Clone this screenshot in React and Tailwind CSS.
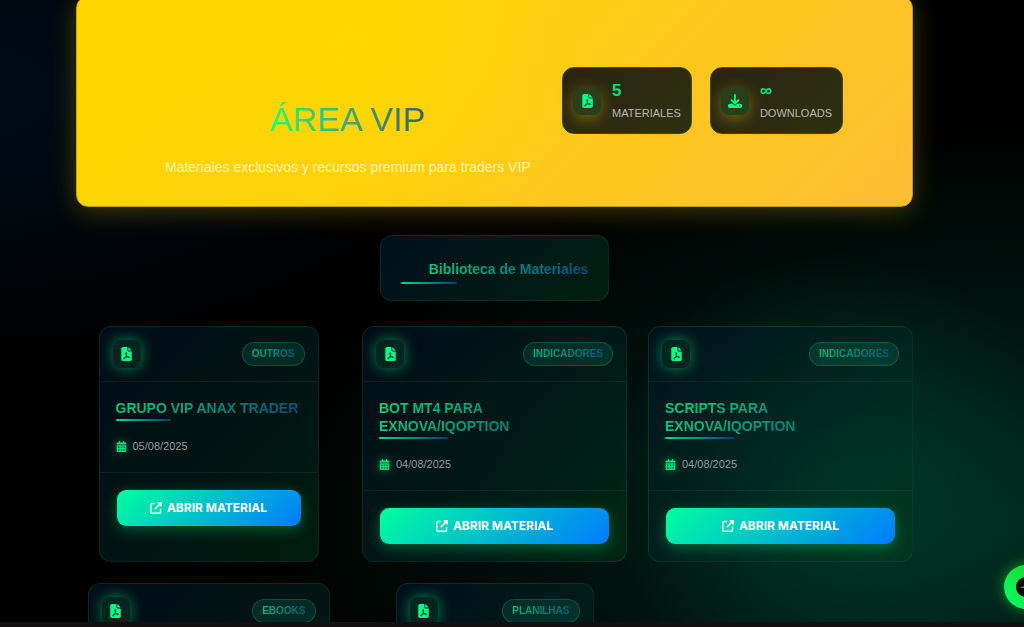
import React from 'react';
import { FaCalendarDays, FaDownload, FaUpRightFromSquare } from 'react-icons/fa6';

const materials = [
  { id: 1, title: 'GRUPO VIP ANAX TRADER', category: 'OUTROS', date: '05/08/2025', width: 'w-[220px]' },
  { id: 2, title: 'BOT MT4 PARA EXNOVA/IQOPTION', category: 'INDICADORES', date: '04/08/2025', width: 'w-full' },
  { id: 3, title: 'SCRIPTS PARA EXNOVA/IQOPTION', category: 'INDICADORES', date: '04/08/2025', width: 'w-full' },
  { id: 4, category: 'EBOOKS', width: 'w-[242px]' },
  { id: 5, category: 'PLANILHAS', width: 'w-[198px]' },
];

const PdfIcon = ({ className = '' }) => (
  <svg viewBox="0 0 384 512" className={`h-3.5 w-[11px] ${className}`} aria-hidden="true">
    <path
      fill="currentColor"
      d="M224 0H64C28.7 0 0 28.7 0 64v384c0 35.3 28.7 64 64 64h256c35.3 0 64-28.7 64-64V160H256c-17.7 0-32-14.3-32-32V0zM256 0v128h128L256 0z"
    />
    <path
      fill="none"
      stroke="#04281f"
      strokeWidth="32"
      strokeLinecap="round"
      strokeLinejoin="round"
      d="M182 212c-22 0-16 52 4 96 22 48 62 84 96 82 30-2 28-34-8-38-54-6-132 18-172 52-26 22-8 44 14 30 34-22 76-98 82-156 2-34-2-66-16-66z"
    />
  </svg>
);

const Stat = ({ icon, value, label }) => (
  <div className="flex items-center gap-[11px] rounded-xl border border-[#3d4a12] bg-[linear-gradient(135deg,#2a2410,#2d3012)] px-[10px] pt-[11px] pb-[10px]">
    <div className="flex size-7 items-center justify-center rounded-lg bg-[#283f19] text-[#00ff88] shadow-[0_4px_15px_rgba(255,215,0,0.35)]">
      {icon}
    </div>
    <div>
      <div className="text-[17px] leading-6 font-bold text-[#00e07c]">{value}</div>
      <div className="text-[11px] leading-5 text-[#b8b8b0]">{label}</div>
    </div>
  </div>
);

const MaterialCard = ({ material }) => (
  <article
    className={`flex flex-col overflow-hidden rounded-xl border border-[#00ff88]/10 bg-[linear-gradient(135deg,rgba(0,20,40,0.6),rgba(0,60,30,0.45))] ${material.width}`}
  >
    <div className="flex items-center justify-between border-b border-[#00ff88]/8 px-[13px] py-[13px]">
      <div className="flex size-7 items-center justify-center rounded-lg bg-[#02261f] text-[#00ff88] shadow-[0_0_14px_rgba(0,255,136,0.5)]">
        <PdfIcon />
      </div>
      <span className="rounded-full border border-[#00ff88]/20 bg-[#00ffc8]/10 px-[9px] py-[3px] text-[10px] leading-4 font-bold">
        <span className="bg-linear-to-r from-[#00b870] to-[#005a78] bg-clip-text text-transparent">{material.category}</span>
      </span>
    </div>

    {material.title ? (
      <>
        <div className="border-b border-white/5 px-4 pt-[17px] pb-[18px]">
          <div className="relative mb-[21px]">
            <h3 className="bg-[linear-gradient(135deg,#00d87c,#00467c)] bg-clip-text text-[14px] leading-[18px] font-bold text-transparent">
              {material.title}
            </h3>
            <span className="absolute -bottom-1 left-0 h-0.5 w-[30%] rounded bg-linear-to-r from-[#00dd80] to-[#003c70]" />
          </div>
          <div className="flex items-center gap-1.5 text-[11px] leading-4 text-[#93999a]">
            <FaCalendarDays size={11} className="text-[#00e47a] drop-shadow-[0_0_5px_rgba(0,255,136,0.5)]" />
            <span>{material.date}</span>
          </div>
        </div>
        <div className="p-[17px]">
          <button
            type="button"
            className="flex h-9 w-full items-center justify-center gap-[5px] rounded-[9px] bg-[linear-gradient(135deg,#00ff9d,#007bff)] font-['Inter',sans-serif] text-[12px] font-bold text-white shadow-[0_4px_14px_rgba(0,255,136,0.3)]"
          >
            <FaUpRightFromSquare size={12} />
            ABRIR MATERIAL
          </button>
        </div>
      </>
    ) : (
      <div className="h-44" />
    )}
  </article>
);

const App = () => {
  return (
    <div className="relative flex h-screen flex-col overflow-hidden bg-black font-['Liberation_Sans',Arial,sans-serif]">
      <main className="min-h-0 flex-1 overflow-hidden bg-[radial-gradient(circle_at_82%_78%,rgba(0,90,60,0.45),transparent_24%),radial-gradient(ellipse_at_105%_85%,#002b1f,transparent_55%),radial-gradient(ellipse_at_-5%_15%,#000d1a,transparent_35%)] pr-[111px] pl-[76px]">
        <header className="-mt-1 flex h-[211px] items-start justify-between rounded-xl border border-[#b89d18] bg-[radial-gradient(circle_at_33%_25%,#ffd700,transparent_38%),linear-gradient(135deg,#ffd700_15%,#ffbd33)] pr-[69px] pl-[88px] shadow-[0_4px_26px_rgba(255,215,0,0.25)]">
          <div className="pt-[102px] text-center">
            <h1 className="mx-auto mb-[18px] w-fit bg-linear-to-r from-[#2cfa6c] to-[#38606c] bg-clip-text text-[34px] leading-10 text-transparent">
              ÁREA VIP
            </h1>
            <p className="text-[14px] leading-5 text-[#fff3b0]">Materiales exclusivos y recursos premium para traders VIP</p>
          </div>
          <div className="flex gap-[18px] pt-[70px]">
            <Stat icon={<PdfIcon />} value="5" label="MATERIALES" />
            <Stat icon={<FaDownload size={14} />} value="∞" label="DOWNLOADS" />
          </div>
        </header>

        <section className="mt-7">
          <div className="mx-auto mb-[25px] w-fit rounded-xl border border-[#00ff88]/10 bg-[linear-gradient(135deg,#000f1c,#002010)] px-5 pt-[21px] pb-[19px]">
            <div className="relative pl-7">
              <h2 className="bg-linear-to-r from-[#00c878] to-[#004c80] bg-clip-text text-[14px] leading-6 font-bold text-transparent">
                Biblioteca de Materiales
              </h2>
              <span className="absolute -bottom-[3px] left-0 h-0.5 w-[30%] rounded bg-linear-to-r from-[#00dd80] to-[#003c70]" />
            </div>
          </div>

          <div className="grid grid-cols-3 justify-items-center gap-[21px]">
            {materials.map((material) => (
              <MaterialCard key={material.id} material={material} />
            ))}
          </div>
        </section>
      </main>

      <div className="h-[5px] shrink-0 bg-[#141012]" />

      <button
        type="button"
        aria-label="Chat"
        className="absolute -right-6 bottom-[18px] flex size-11 items-center justify-center rounded-full bg-linear-to-tr from-[#00ff6a] to-[#1ed010] shadow-[0_0_14px_rgba(0,255,60,0.5)]"
      >
        <svg viewBox="0 0 20 20" className="size-5" aria-hidden="true">
          <circle cx="10" cy="10" r="10" fill="#000" />
          <path d="M4 11l6-3v3z" fill="#12b84e" />
        </svg>
      </button>
    </div>
  );
};

export default App;
